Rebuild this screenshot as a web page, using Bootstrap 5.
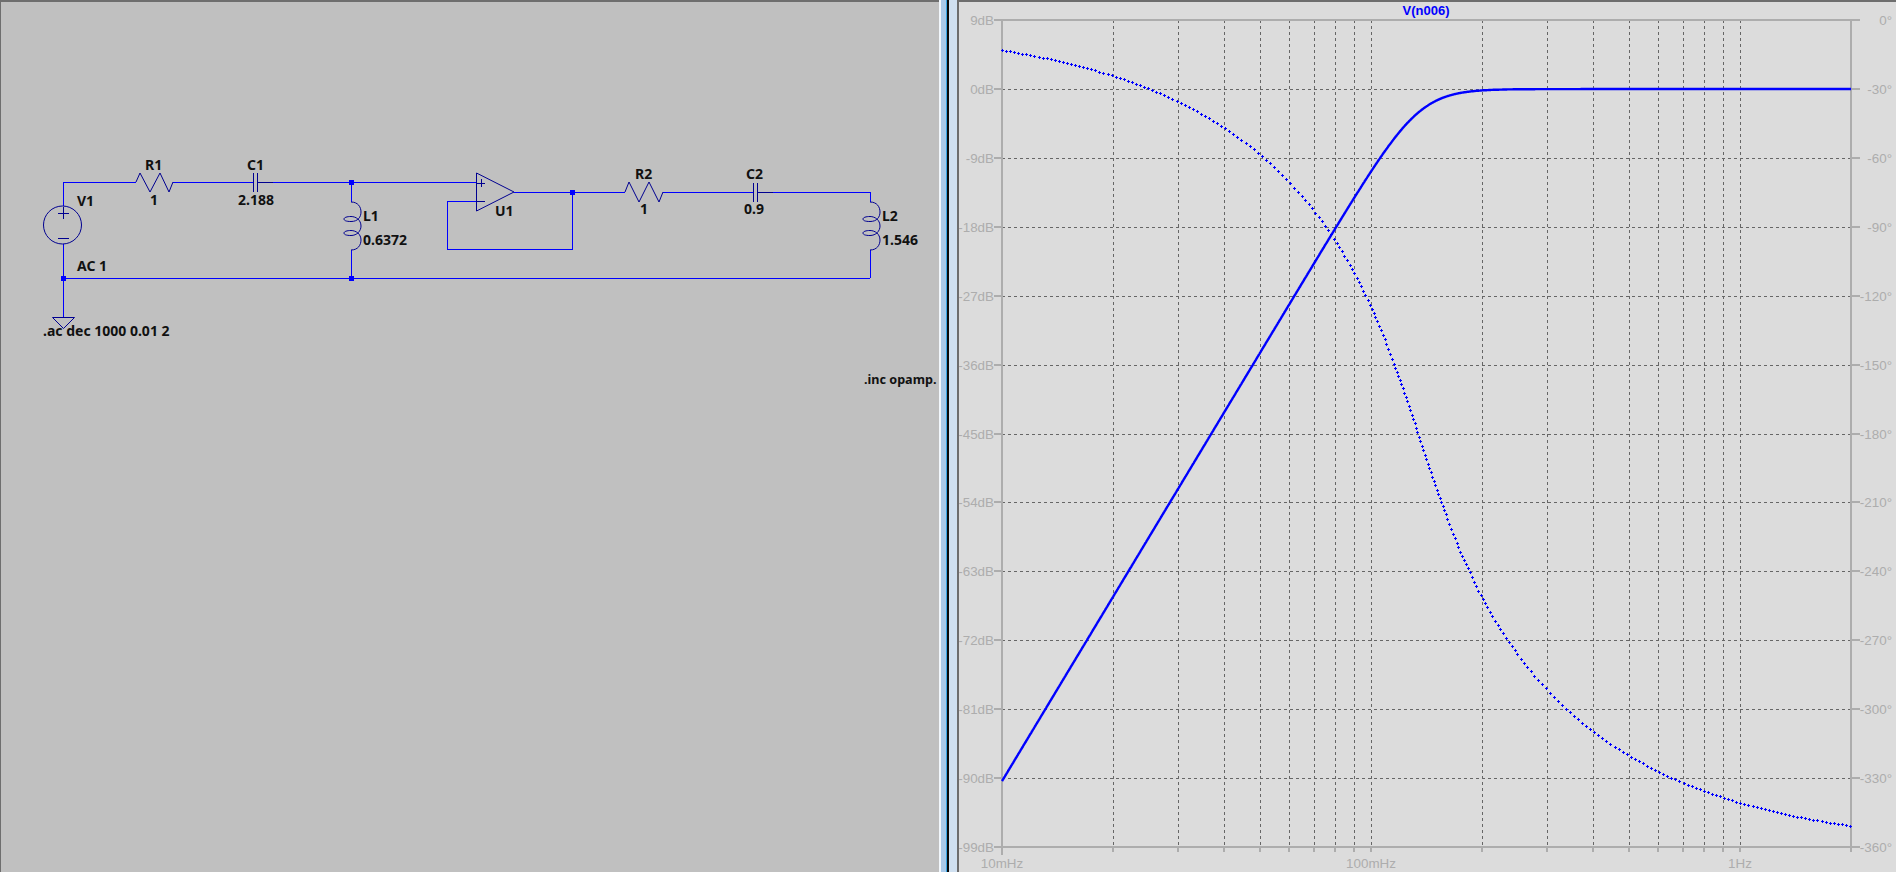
<!DOCTYPE html>
<html lang="en">
<head>
<meta charset="UTF-8">
<title>LTspice</title>
<link href="https://cdn.jsdelivr.net/npm/bootstrap@5.3.3/dist/css/bootstrap.min.css" rel="stylesheet">
<style>
html, body { height: 872px; overflow: hidden; background: #dcdcdc; }
.app-shell { width: 1896px; height: 872px; }
.sch-pane { width: 939px; background: #c0c0c0; border-top: 2px solid #6e6e6e; border-left: 1px solid #6e6e6e; }
.pane-gap { width: 20px; background: linear-gradient(90deg, #f2f7fc 0 2px, #a9c9e9 2px 7px, #35a5e5 7px 8px, #0a0a0a 8px 10px, #d0e0f0 10px 18px, #6e6e6e 18px 20px); }
.plot-pane { background: #dcdcdc; border-top: 2px solid #6e6e6e; }
.sch-pane svg, .plot-pane svg { display: block; }
.wire { stroke: #0000ff; stroke-width: 1; fill: none; shape-rendering: crispEdges; }
.part { stroke: #000090; stroke-width: 1; fill: none; }
.part-straight { stroke: #000090; stroke-width: 1; fill: none; shape-rendering: crispEdges; }
.sch-label { font-family: "Noto Sans", sans-serif; font-weight: 700; font-size: 14px; fill: #111; }
.sch-label .inc-text { font-size: 12.6px; }
.axis-line { stroke: #adadad; stroke-width: 2; fill: none; shape-rendering: crispEdges; }
.grid-line { stroke: #666; stroke-width: 1; stroke-dasharray: 3 3; fill: none; shape-rendering: crispEdges; }
.axis-label { font-family: "Liberation Sans", sans-serif; font-size: 13.4px; fill: #adadad; }
.plot-title { font-family: "Liberation Sans", sans-serif; font-size: 13px; font-weight: 700; fill: #0000ff; }
</style>
</head>
<body>
<div class="app-shell d-flex">
  <div class="sch-pane flex-shrink-0">
    <svg width="938" height="870" viewBox="1 2 938 870" id="sch">
      <g class="wire">
        <path d="M63 182H136M173 182H253M273 182H476M351 182V202M351 250V278M63 206V182M63 244V278H870M63 278V317"/>
        <path d="M476 201H447V249H572V192M514 192H625M663 192H753M773 192H870V202M870 250V278"/>
      </g>
      <g class="part">
        <path d="M136 182L140 173L150 192L160 173L169 192L173 182"/>
        <path d="M625 192L629 182L639 202L649 182L659 202L663 192"/>
        <circle cx="62.5" cy="225" r="19"/>
        <path d="M52.5 317.5H74.5L63.5 328.5Z"/>
        <path d="M476.5 173L514 192L476.5 211Z"/>
      </g>
      <g class="part-straight">
        <path d="M58 213H69M63 207V219M58 238H69"/>
        <path d="M477 183H485M481 179V187M477 201H485"/>
      </g>
      <g class="part-straight" id="caps"></g>
      <g class="part" id="coils"></g>
      <g fill="#0000ff" id="dots"></g>
      <g class="sch-label">
        <text x="145" y="170">R1</text><text x="150" y="205">1</text>
        <text x="247" y="170">C1</text><text x="238" y="205">2.188</text>
        <text x="77" y="206">V1</text><text x="77" y="271">AC 1</text>
        <text x="363" y="221">L1</text><text x="363" y="245">0.6372</text>
        <text x="495" y="216">U1</text>
        <text x="635" y="179">R2</text><text x="640" y="214">1</text>
        <text x="746" y="179">C2</text><text x="744" y="214">0.9</text>
        <text x="882" y="221">L2</text><text x="882" y="245">1.546</text>
        <text x="43" y="336">.ac dec 1000 0.01 2</text>
        <text class="inc-text" x="864" y="384">.inc opamp.</text>
      </g>
    </svg>
  </div>
  <div class="pane-gap flex-shrink-0"></div>
  <div class="plot-pane flex-grow-1">
    <svg width="937" height="870" viewBox="959 2 937 870" id="plot"></svg>
  </div>
</div>
<script>
  const NS = "http://www.w3.org/2000/svg";
  function el(parent, tag, attrs, text) {
    const n = document.createElementNS(NS, tag);
    for (const k in attrs) n.setAttribute(k, attrs[k]);
    if (text) n.textContent = text;
    parent.appendChild(n);
    return n;
  }

  // schematic parts that repeat
  const caps = document.getElementById("caps");
  [[253, 182, 273], [753, 192, 773]].forEach(([x, y, end]) => {
    el(caps, "path", { d: `M${x} ${y - 9}V${y + 10}M${x + 4} ${y - 9}V${y + 10}M${x + 4} ${y}H${end}` });
  });
  const coils = document.getElementById("coils");
  [351, 870].forEach(x => {
    const p = n => x + n;
    el(coils, "path", { d: `M${x} 202C${p(7)} 202 ${p(10)} 207 ${p(10)} 212C${p(10)} 217 ${p(7)} 221.5 ${x} 221.5C${p(-5)} 221.5 ${p(-7)} 220.5 ${p(-7)} 219C${p(-7)} 217.5 ${p(-4)} 216.5 ${x} 216.5C${p(5)} 216.5 ${p(10)} 220 ${p(10)} 226C${p(10)} 231 ${p(6)} 235.5 ${x} 235.5C${p(-5)} 235.5 ${p(-7)} 234.5 ${p(-7)} 233C${p(-7)} 231.5 ${p(-4)} 230.5 ${x} 230.5C${p(5)} 230.5 ${p(10)} 234 ${p(10)} 240C${p(10)} 245 ${p(7)} 250 ${x} 250` });
  });
  const dots = document.getElementById("dots");
  [[63, 278], [351, 182], [351, 278], [572, 192]].forEach(([x, y]) => {
    el(dots, "rect", { x: x - 2, y: y - 2, width: 5, height: 5 });
  });

  // plot
  const plot = document.getElementById("plot");
  const L = 1002, R = 1851, T = 20, B = 847, DEC = 369;
  const fx = f => L + DEC * Math.log10(f / 0.01);
  const dbY = db => 89 - db * (B - T) / 108;
  // small taper: the real trace sits a little below the ideal phase
  const phY = ph => {
    const y = T - ph * (B - T) / 360;
    return y + 4.7 - 2.7 * (y - T) / (B - T);
  };

  // grid first
  for (let i = 1; i <= 11; i++) {
    const y = Math.round(T + i * (B - T) / 12);
    el(plot, "line", { class: "grid-line", x1: L, x2: R, y1: y, y2: y });
  }
  [0.01, 0.1, 1].forEach(dec => {
    for (let m = 1; m <= 9; m++) {
      const f = dec * m;
      if (f >= 2 || f === 0.01) continue;
      const x = Math.round(fx(f));
      el(plot, "line", { class: "grid-line", x1: x, x2: x, y1: T, y2: B });
      el(plot, "line", { class: "axis-line", x1: x, x2: x, y1: B, y2: B + 5 });
    }
  });

  // axes
  el(plot, "rect", { class: "axis-line", x: L, y: T, width: R - L, height: B - T });
  el(plot, "line", { class: "axis-line", x1: L, x2: L, y1: B, y2: B + 8 });
  el(plot, "line", { class: "axis-line", x1: R, x2: R, y1: B, y2: B + 5 });
  for (let i = 0; i <= 12; i++) {
    const y = Math.round(T + i * (B - T) / 12);
    el(plot, "line", { class: "axis-line", x1: L - 8, x2: L, y1: y, y2: y });
    el(plot, "line", { class: "axis-line", x1: R, x2: R + 9, y1: y, y2: y });
    el(plot, "text", { class: "axis-label", x: L - 8, y: y + 5, "text-anchor": "end" }, (9 - i * 9) + "dB");
    el(plot, "text", { class: "axis-label", x: 1892, y: y + 5, "text-anchor": "end" }, (-i * 30) + "°");
  }
  [[0.01, "10mHz"], [0.1, "100mHz"], [1, "1Hz"]].forEach(([f, t]) => {
    el(plot, "text", { class: "axis-label", x: fx(f), y: 868, "text-anchor": "middle" }, t);
  });
  el(plot, "text", { class: "plot-title", x: 1426, y: 15, "text-anchor": "middle" }, "V(n006)");

  // response of the two filter stages, values from the schematic
  function stage(w, Rv, Cv, Lv) {
    const x = w * Lv - 1 / (w * Cv);
    const d = Rv * Rv + x * x;
    // j*w*L / (R + j*x)
    return { re: w * Lv * x / d, im: w * Lv * Rv / d };
  }
  const pts = [];
  for (let i = 0; i <= 2301; i++) {
    const f = 0.01 * Math.pow(10, i / 1000);
    const w = 2 * Math.PI * f;
    const a = stage(w, 1, 2.188, 0.6372), b = stage(w, 1, 0.9, 1.546);
    const re = a.re * b.re - a.im * b.im, im = a.re * b.im + a.im * b.re;
    let ph = Math.atan2(im, re) * 180 / Math.PI;
    if (ph > 0) ph -= 360;
    pts.push({ x: fx(f), mag: dbY(10 * Math.log10(re * re + im * im)), ph: phY(ph) });
  }
  el(plot, "polyline", { points: pts.map(p => p.x.toFixed(1) + "," + p.mag.toFixed(1)).join(" "), fill: "none", stroke: "#0000ff", "stroke-width": 2.4 });

  // phase is drawn as small plus marks, one every 4px or so
  let d = "", last = null;
  pts.forEach(p => {
    if (!last || Math.max(Math.abs(p.x - last.x), Math.abs(p.ph - last.ph)) >= 4) {
      const x = Math.round(p.x) + 0.5, y = Math.round(p.ph) + 0.5;
      d += `M${x - 1.5} ${y}H${x + 1.5}M${x} ${y - 1.5}V${y + 1.5}`;
      last = p;
    }
  });
  el(plot, "path", { d: d, stroke: "#0000ff", "stroke-width": 1, fill: "none", "shape-rendering": "crispEdges" });
</script>
<script src="https://cdn.jsdelivr.net/npm/bootstrap@5.3.3/dist/js/bootstrap.bundle.min.js"></script>
</body>
</html>
